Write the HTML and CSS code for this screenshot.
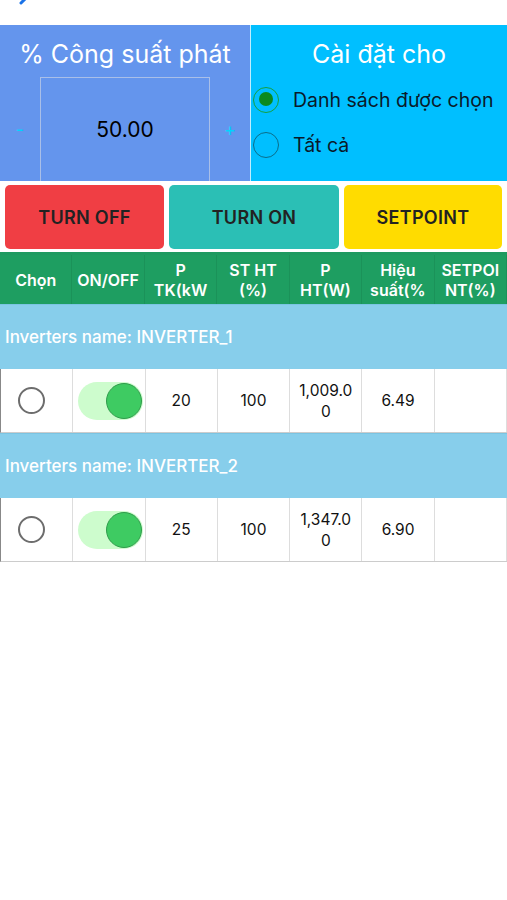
FILE: index.html
```html
<!DOCTYPE html>
<html>
	<head>
		<meta charset="UTF-8">
		<title>Điều khiển inverter</title>
		<link rel="stylesheet" href="styles.css">
	</head>
	<body>
		<div class="top-bar">
			<svg class="back-icon" width="14" height="14" viewBox="0 0 14 14"><path d="M10 -4 L3 3" stroke="#1a73e8" stroke-width="3" fill="none" stroke-linecap="round"/></svg>
		</div>
		<!--cài đặt công suất-->
		<div class="setting">
			<div class="setting-power">
				<div class="setting-title">% Công suất phát</div>
				<div class="power-row">
					<span class="power-step">-</span>
					<div class="power-input">50.00</div>
					<span class="power-step">+</span>
				</div>
			</div>
			<div class="setting-line"></div>
			<div class="setting-target">
				<div class="setting-title">Cài đặt cho</div>
				<div class="target-item"><span class="target-radio checked"></span>Danh sách được chọn</div>
				<div class="target-item"><span class="target-radio"></span>Tất cả</div>
			</div>
		</div>
		<!--nút điều khiển-->
		<div class="actions">
			<a href="javascript:void(0);" class="action-btn btn-off">TURN OFF</a>
			<a href="javascript:void(0);" class="action-btn btn-on">TURN ON</a>
			<a href="javascript:void(0);" class="action-btn btn-setpoint">SETPOINT</a>
		</div>
		<!--bảng inverter-->
		<div class="table">
			<div class="table-head">
				<div class="head-cell">Chọn</div>
				<div class="head-cell">ON/OFF</div>
				<div class="head-cell">P<br>TK(kW</div>
				<div class="head-cell">ST HT<br>(%)</div>
				<div class="head-cell">P<br>HT(W)</div>
				<div class="head-cell">Hiệu<br>suất(%</div>
				<div class="head-cell">SETPOI<br>NT(%)</div>
			</div>

			<div class="group-row">Inverters name: INVERTER_1</div>
			<div class="data-row">
				<div class="data-cell"><span class="row-radio"></span></div>
				<div class="data-cell"><span class="switch"><span class="switch-knob"></span></span></div>
				<div class="data-cell">20</div>
				<div class="data-cell">100</div>
				<div class="data-cell">1,009.0<br>0</div>
				<div class="data-cell">6.49</div>
				<div class="data-cell"></div>
			</div>

			<div class="group-row">Inverters name: INVERTER_2</div>
			<div class="data-row">
				<div class="data-cell"><span class="row-radio"></span></div>
				<div class="data-cell"><span class="switch"><span class="switch-knob"></span></span></div>
				<div class="data-cell">25</div>
				<div class="data-cell">100</div>
				<div class="data-cell">1,347.0<br>0</div>
				<div class="data-cell">6.90</div>
				<div class="data-cell"></div>
			</div>
		</div>
	</body>
</html>
```

FILE: styles.css
```css
body {
	margin: 0;
	background: #fff;
	font-family: Inter, "Liberation Sans", Arial, sans-serif;
	color: #111;
}
div, span, a {
	margin: 0;
	padding: 0;
	box-sizing: border-box;
}
a {
	text-decoration: none;
}
.top-bar {
	height: 25px;
	position: relative;
}
.back-icon {
	position: absolute;
	left: 18px;
	top: 0;
}
.setting {
	display: flex;
	height: 156px;
}
.setting-power {
	width: 250px;
	background: #6495ed;
	display: flex;
	flex-direction: column;
	align-items: center;
}
.setting-line {
	width: 1px;
	background: #bfeeff;
}
.setting-target {
	flex: 1;
	background: #00bfff;
}
.setting-title {
	color: #fff;
	font-size: 25px;
	height: 52px;
	line-height: 58px;
	text-align: center;
	white-space: nowrap;
}
.power-row {
	display: flex;
	align-items: center;
	flex: 1;
}
.power-step {
	width: 40px;
	text-align: center;
	color: #00d4ff;
	font-size: 18px;
}
.power-input {
	width: 170px;
	height: 104px;
	border: 1px solid #a9bfe8;
	border-bottom: none;
	display: flex;
	align-items: center;
	justify-content: center;
	font-size: 21px;
	color: #000;
}
.target-item {
	display: flex;
	align-items: center;
	height: 45px;
	font-size: 19.5px;
	color: #0a1a2a;
}
.target-radio {
	width: 26px;
	height: 26px;
	border-radius: 50%;
	border: 1.5px solid #0b6d8a;
	margin: 0 14px 0 2px;
	position: relative;
}
.target-radio.checked {
	border-color: #15a040;
}
.target-radio.checked::after {
	content: "";
	position: absolute;
	left: 4.5px;
	top: 4.5px;
	width: 14px;
	height: 14px;
	border-radius: 50%;
	background: #0b8a1e;
}
.actions {
	display: flex;
	gap: 5px;
	padding: 4px 5px 3px 5px;
}
.action-btn {
	flex: 1;
	height: 64px;
	border-radius: 5px;
	display: flex;
	align-items: center;
	justify-content: center;
	font-size: 18px;
	letter-spacing: 0.3px;
	font-weight: 600;
	color: #222;
}
.btn-off {
	background: #f03e44;
	flex: 159;
}
.btn-on {
	background: #2bbfb5;
	flex: 170;
}
.btn-setpoint {
	background: #ffdc00;
	flex: 158;
}
.table {
	border-top: 3px solid #1e9a60;
}
.table-head, .data-row {
	display: grid;
	grid-template-columns: repeat(7, 1fr);
}
.table-head {
	background: #1e9e61;
	height: 49px;
}
.head-cell {
	color: #fff;
	font-weight: 600;
	font-size: 16px;
	line-height: 20px;
	text-align: center;
	display: flex;
	align-items: center;
	justify-content: center;
	overflow: hidden;
	white-space: nowrap;
	border-right: 1px solid #1b9259;
}
.group-row {
	background: #87ceeb;
	height: 65px;
	line-height: 65px;
	padding-left: 5px;
	color: #fff;
	font-size: 17px;
	font-weight: 500;
	border-top: 1px solid #7ac4e2;
}
.data-row {
	height: 64px;
	border-left: 1px solid #888;
	border-bottom: 1px solid #ccc;
}
.data-cell {
	display: flex;
	align-items: center;
	justify-content: center;
	text-align: center;
	font-size: 15.5px;
	line-height: 21px;
	border-right: 1px solid #ddd;
}
.data-cell:first-child {
	padding-right: 11px;
}
.row-radio {
	width: 27px;
	height: 27px;
	border-radius: 50%;
	border: 2px solid #6d6d6d;
}
.switch {
	width: 65px;
	height: 38px;
	border-radius: 19px;
	background: #cdfccd;
	position: relative;
	margin-left: 4px;
}
.switch-knob {
	position: absolute;
	right: 1px;
	top: 1px;
	width: 36px;
	height: 36px;
	border-radius: 50%;
	background: #3ecb62;
	border: 1px solid #2f9c4b;
}
```
